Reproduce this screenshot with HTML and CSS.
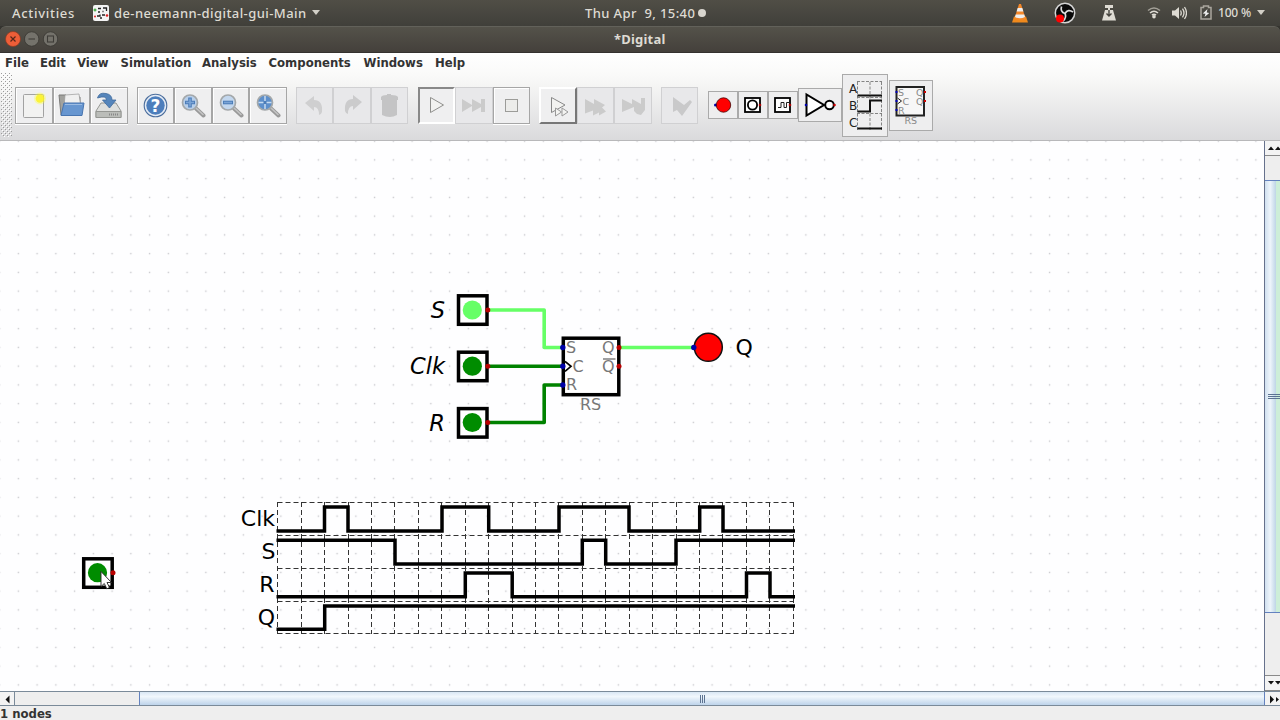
FILE: index.html
```
<!DOCTYPE html>
<html lang="en">
<head>
    <meta charset="UTF-8">
    <meta name="viewport" content="width=device-width, initial-scale=1.0">
    <title>*Digital</title>
    <link rel="stylesheet" href="styles.css">
</head>
<body>
    <!-- desktop bar -->
    <div class="topbar">
        <span class="activities">Activities</span>
        <svg class="app-icon" width="16" height="16" viewBox="0 0 16 16">
            <rect width="16" height="16" rx="2" fill="#f4f4f4"/>
            <path d="M5 3.500h3M10 3h3.500v3M5 7h2M9.500 6.500h1M4 11h3v-1.500M7 13h2M9 10h3" fill="none" stroke="#222" stroke-width="1.300"/>
            <path d="M.5 5h3M2 3.500v3" stroke="#1a9a1a"/>
            <circle cx="2" cy="11.500" r="1" fill="#d22"/><circle cx="14" cy="10.500" r="1.300" fill="#d22"/>
        </svg>
        <span class="app-name">de-neemann-digital-gui-Main</span>
        <i class="caret"></i>
        <span class="clock">Thu Apr&nbsp; 9, 15:40</span>
        <i class="bullet"></i>
        <div class="tray">
            <svg class="vlc" width="18" height="20" viewBox="0 0 18 20">
                <path d="M1 19.500l2-6h12l2 6z" fill="#f08a1d"/>
                <path d="M8 1h2l4.500 14.500q-5.500 3-11 0z" fill="#f5882a"/>
                <path d="M6.700 5h4.600l1.100 3.500H5.600zM4.700 11.500h8.600l.7 2.500q-5 2.500-10 0z" fill="#eee"/>
            </svg>
            <svg class="obs" width="22" height="22" viewBox="0 0 22 22">
                <circle cx="11" cy="11" r="9.700" fill="#090909" stroke="#d4d4d4" stroke-width="1.500"/>
                <path d="M11 11.500Q6 10 7.500 4.500M11 11.500q3-5 8-1.500M11 11.500q2 4-2 7.500" fill="none" stroke="#ddd" stroke-width="1.700"/>
                <circle cx="6" cy="16.500" r="4" fill="#f00"/>
            </svg>
            <svg class="drive" width="14" height="16" viewBox="0 0 14 16">
                <path d="M3 0h8v3H8v2h3l3 10.500H0L3 5h3V3H3z" fill="#dedbd3"/>
                <path d="M7 5v5M4.500 8.500L7 11l2.500-2.500" fill="none" stroke="#45433e" stroke-width="1.400"/>
            </svg>
            <svg class="wifi" width="14" height="13" viewBox="0 0 14 13">
                <path d="M1 4.500q6-5 12 0" fill="none" stroke="#a3a098" stroke-width="1.500"/>
                <path d="M3 7q4-3.500 8 0M5 9.200q2-1.700 4 0" fill="none" stroke="#dedbd3" stroke-width="1.600"/>
                <circle cx="7" cy="10.800" r="1.800" fill="#dedbd3"/>
            </svg>
            <svg class="volume" width="15" height="14" viewBox="0 0 15 14">
                <path d="M0 4.500h3L7 1v12L3 9.500H0z" fill="#dedbd3"/>
                <path d="M8.500 4.500q1.500 2.500 0 5M10.500 2.700q3 4.300 0 8.600M12.500 1q4 6 0 12" fill="none" stroke="#dedbd3" stroke-width="1.300"/>
            </svg>
            <svg class="battery" width="12" height="15" viewBox="0 0 12 15">
                <path d="M1 2.500h2.500V1h5v1.500H11V14H1z" fill="none" stroke="#aaa79e" stroke-width="1.500"/>
                <path d="M7.500 4L2.800 8.500l2.700.3L4.500 12 9.300 8l-2.600-.5z" fill="#eee"/>
            </svg>
            <span class="percent">100 %</span>
            <i class="caret"></i>
        </div>
    </div>

    <div class="titlebar-wrap">
        <div class="titlebar">
            <svg class="win-buttons" width="54" height="18" viewBox="0 0 54 18">
                <circle cx="9" cy="9" r="7.500" fill="#ee5e38" stroke="#8b3b22" stroke-width=".7"/>
                <path d="M6.500 6.500l5 5m0-5l-5 5" stroke="#57271a" stroke-width="1.200"/>
                <circle cx="27.700" cy="9" r="7.200" fill="#74726b" stroke="#33322e" stroke-width=".7"/>
                <path d="M24.500 9h6.500" stroke="#3e3c38" stroke-width="1.100"/>
                <circle cx="46.500" cy="9" r="7.200" fill="#74726b" stroke="#33322e" stroke-width=".7"/>
                <rect x="43.500" y="6" width="6" height="6" fill="none" stroke="#3e3c38" stroke-width="1.100"/>
            </svg>
            <span class="title">*Digital</span>
        </div>
    </div>

    <div class="header">
        <div class="menubar">
            <span class="m-file">File</span>
            <span class="m-edit">Edit</span>
            <span class="m-view">View</span>
            <span class="m-simulation">Simulation</span>
            <span class="m-analysis">Analysis</span>
            <span class="m-components">Components</span>
            <span class="m-windows">Windows</span>
            <span class="m-help">Help</span>
        </div>
        <div class="toolbar">
            <svg class="grip" width="11" height="64">
                <defs>
                    <pattern id="grip" width="4" height="4" patternUnits="userSpaceOnUse">
                        <path d="M0 0h1v1H0zM2 2h1v1H2z" fill="#9b9b9b"/>
                        <path d="M1 1h1v1H1zM3 3h1v1H3z" fill="#fff"/>
                    </pattern>
                </defs>
                <rect width="11" height="64" fill="url(#grip)"/>
            </svg>
            <div class="group">
                <div class="btn">
                    <svg viewBox="0 0 28 28">
                        <rect x="4.500" y="3.500" width="20" height="23" rx="1" fill="#f2f2f1" stroke="#a2a2a2"/>
                        <circle cx="21" cy="7.500" r="6" fill="#ffff35" opacity=".35"/><circle cx="21" cy="7.500" r="4.300" fill="#fcf31c" opacity=".8"/>
                    </svg>
                </div>
                <div class="btn">
                    <svg viewBox="0 0 28 28">
                        <path d="M2 4h7l2 2h12v18H4z" fill="#a2a29e" stroke="#7b7b79"/>
                        <path d="M8 4l14-1 2 14H7z" fill="#f0f0f0" stroke="#999" stroke-width=".7"/>
                        <path d="M7 12h20l-2 12.500H4z" fill="#6796d0" stroke="#4875b0"/>
                        <path d="M8 13.500h17" stroke="#9cbce3"/>
                    </svg>
                </div>
                <div class="btn">
                    <svg viewBox="0 0 28 28">
                        <path d="M7 12h15l5 8v6.500H2V20z" fill="#dedfdd" stroke="#959793"/>
                        <path d="M2 20.500h25v6H2z" fill="#bbbdb9" stroke="#959793"/>
                        <path d="M15 23.500h9" stroke="#888" stroke-width="2" stroke-dasharray="1 1"/>
                        <path d="M3.500 7Q5 1 12 2.500q6 1 6 6.500h4l-6.500 8-7-8h4q0-5-9-2z" fill="#5585bb" stroke="#3f6a9c" stroke-width=".8"/>
                    </svg>
                </div>
            </div>
            <div class="group">
                <div class="btn">
                    <svg viewBox="0 0 28 28">
                        <circle cx="14.500" cy="14.500" r="11.300" fill="#e4ebf5" stroke="#4a6d9c" stroke-width="1.100"/>
                        <circle cx="14.500" cy="14.500" r="9.200" fill="#4d7ebc"/>
                        <text class="help-mark" x="14.500" y="20.500">?</text>
                    </svg>
                </div>
                <div class="btn">
                    <svg viewBox="0 0 28 28">
                        <path d="M18 17.500l7.500 7" stroke="#999" stroke-width="4" stroke-linecap="round"/>
                        <path d="M18 17l7 6.500" stroke="#c4c4c4" stroke-width="1.600" stroke-linecap="round"/>
                        <circle cx="12" cy="11.500" r="7.500" fill="#b8cfea" stroke="#a4a8aa" stroke-width="1.700"/>
                        <path d="M12 6.500v10M7 11.500h10" stroke="#4c7db8" stroke-width="3.600"/><path d="M12 7.500v8M8 11.500h8" stroke="#7ba4d6" stroke-width="1.600"/>
                    </svg>
                </div>
                <div class="btn">
                    <svg viewBox="0 0 28 28">
                        <path d="M18 17.500l7.500 7" stroke="#999" stroke-width="4" stroke-linecap="round"/>
                        <path d="M18 17l7 6.500" stroke="#c4c4c4" stroke-width="1.600" stroke-linecap="round"/>
                        <circle cx="12" cy="11.500" r="7.500" fill="#c3d7ee" stroke="#a4a8aa" stroke-width="1.700"/>
                        <path d="M7 11.500h10" stroke="#4c7db8" stroke-width="3.600"/><path d="M8 11.500h8" stroke="#7ba4d6" stroke-width="1.600"/>
                    </svg>
                </div>
                <div class="btn">
                    <svg viewBox="0 0 28 28">
                        <path d="M18 17.500l7.500 7" stroke="#999" stroke-width="4" stroke-linecap="round"/>
                        <path d="M18 17l7 6.500" stroke="#c4c4c4" stroke-width="1.600" stroke-linecap="round"/>
                        <circle cx="12" cy="11.500" r="7.500" fill="#5d8fcb" stroke="#a4a8aa" stroke-width="1.700"/>
                        <path d="M12 5v13M5.500 11.500h13" stroke="#c6daf0" stroke-width="1.500"/>
                        <rect x="10.500" y="10" width="3" height="3" fill="#4c7db8"/>
                    </svg>
                </div>
            </div>
            <div class="group">
                <div class="btn off">
                    <svg viewBox="0 0 28 28"><path d="M5 12l9-7v4q9 0 8 12-1 3-3 3 0-8-5-8v4z" fill="#cfcfd0"/></svg>
                </div>
                <div class="btn off">
                    <svg viewBox="0 0 28 28"><path d="M24 11l-9-7v4Q6 8 7 20q1 3 3 3 0-8 5-8v4z" fill="#cbcbcc"/></svg>
                </div>
                <div class="btn off">
                    <svg viewBox="0 0 28 28"><path d="M6 6q1-2 6-2V3h4v1q6 0 7 2v3h-1v15q-7 4-15 0V9H6z" fill="#c4c4c5"/></svg>
                </div>
            </div>
            <div class="group">
                <div class="btn pressed">
                    <svg viewBox="0 0 28 28"><path d="M8.500 6.500v15l13-7.500z" fill="#f2f2f0" stroke="#8f8f8c"/></svg>
                </div>
                <div class="btn off">
                    <svg viewBox="0 0 28 28"><path d="M3 8l10 6V8l9 5V8h4v13h-4v-5l-9 5v-6L3 21z" fill="#cbcbcb"/></svg>
                </div>
                <div class="btn">
                    <svg viewBox="0 0 28 28"><rect x="8.500" y="8.500" width="12" height="12" fill="#ececea" stroke="#9c9c99"/></svg>
                </div>
            </div>
            <div class="group">
                <div class="btn raised">
                    <svg viewBox="0 0 28 28">
                        <path d="M7.500 6.500v15l13.500-7.500z" fill="#f2f2f0" stroke="#888"/>
                        <path d="M11.500 17v8l6-4zM18 17v8l6-4z" fill="#f4f4f2" stroke="#999"/>
                    </svg>
                </div>
                <div class="btn off">
                    <svg viewBox="0 0 28 28"><path d="M4 8l9 5V8l11 6-3 2.500 4 4-7 4v-3l-6 3v-5l-8 3z" fill="#cbcbcb"/></svg>
                </div>
                <div class="btn off">
                    <svg viewBox="0 0 28 28"><path d="M3 8l10 5V8l9 5V7h4v12l-4 5-4-1-3-3v-4L3 21z" fill="#cbcbcb"/></svg>
                </div>
            </div>
            <div class="group">
                <div class="btn off">
                    <svg viewBox="0 0 28 28"><path d="M8 6l11 8 6-5 2 2-10 14-5-6-4 2z" fill="#c9c9ca"/></svg>
                </div>
            </div>
            <div class="parts">
                <div class="part small">
                    <svg width="28" height="26"><circle cx="6.500" cy="13" r="1.500" fill="#00a"/><circle cx="14.500" cy="13" r="7.200" fill="#f00" stroke="#400" stroke-width=".8"/></svg>
                </div>
                <div class="part small">
                    <svg width="28" height="26">
                        <rect x="6" y="6" width="15" height="14" fill="#fff" stroke="#000" stroke-width="1.800"/>
                        <circle cx="13.500" cy="13" r="4.600" fill="none" stroke="#000" stroke-width="1.800"/><circle cx="21" cy="13" r="1.300" fill="#a00"/>
                    </svg>
                </div>
                <div class="part small">
                    <svg width="28" height="26">
                        <rect x="6" y="6" width="15" height="14" fill="#fff" stroke="#000" stroke-width="1.800"/>
                        <path d="M9 15.500h3v-5h3v5h2.500v-5H20" fill="none" stroke="#222"/><circle cx="21" cy="13" r="1.300" fill="#a00"/>
                    </svg>
                </div>
                <div class="part not">
                    <svg width="41" height="32">
                        <path d="M7.500 5.500v21L25 16z" fill="#fff" stroke="#000" stroke-width="2"/>
                        <circle cx="30.500" cy="16" r="4.300" fill="#fff" stroke="#000" stroke-width="2"/>
                        <circle cx="7" cy="16" r="1.300" fill="#00a"/><circle cx="35.500" cy="16" r="1.300" fill="#c00"/>
                    </svg>
                </div>
                <div class="part timing">
                    <svg width="44" height="61">
                        <path d="M14.500 7v48M27 7v48M38.500 7v48M14 6.500h25M14 22.500h25M14 38.500h25" fill="none" stroke="#777" stroke-width=".9" stroke-dasharray="3 1.500"/>
                        <path d="M14.500 20.500H39M14.500 36.500H27v-11h12M14.500 53.500H39" fill="none" stroke="#111" stroke-width="2"/>
                        <g class="timing-label"><text x="6" y="18">A</text><text x="6" y="35">B</text><text x="6" y="51.500">C</text></g>
                    </svg>
                </div>
                <div class="part flipflop">
                    <svg width="42" height="49">
                        <rect x="6.500" y="6" width="27.500" height="28.500" fill="#f7f7f7" stroke="#222" stroke-width="2"/>
                        <path d="M7.500 17l4 3-4 3" fill="none" stroke="#222"/>
                        <g class="ff-label"><text x="8" y="14.500">S</text><text x="12.500" y="23.500">C</text><text x="8" y="32.500">R</text><text x="26" y="14.500">Q</text><text x="26" y="23.500">Q</text><text x="14.500" y="43">RS</text></g>
                        <path d="M5.500 11h2M5.500 20h2M5.500 29h2" stroke="#00b" stroke-width="2"/><path d="M34 11h2M34 20h2" stroke="#c00" stroke-width="2"/>
                    </svg>
                </div>
            </div>
        </div>
    </div>

    <div class="workspace">
        <svg class="circuit" width="1264" height="550" viewBox="0 141 1264 550">
            <defs>
                <pattern id="dots" x="-9.800" y="338" width="18.750" height="18.750" patternUnits="userSpaceOnUse">
                    <rect x="8.700" y="8.700" width="1.400" height="1.400" fill="#c6c6ca"/>
                </pattern>
            </defs>
            <rect x="0" y="141" width="1264" height="550" fill="url(#dots)"/>

            <!-- wires -->
            <g fill="none" stroke-width="3.600" stroke-linejoin="round">
                <path class="high" d="M488 310h56.200v37.500H563M619 347.500h75"/>
                <path class="low" d="M488 366.300h75M488 422.500h56.200V385H563"/>
            </g>

            <!-- inputs -->
            <g fill="#fff" stroke="#000" stroke-width="3.500">
                <rect x="458.500" y="295.800" width="28.500" height="28.500"/>
                <rect x="458.500" y="352.200" width="28.500" height="28.500"/>
                <rect x="458.500" y="408.600" width="28.500" height="28.500"/>
                <rect x="83.700" y="558.800" width="28.500" height="28.500"/>
            </g>
            <circle cx="472.300" cy="310" r="9.600" fill="#66ff66"/>
            <g fill="#008c00">
                <circle cx="472.300" cy="366.200" r="9.600"/>
                <circle cx="472.300" cy="422.500" r="9.600"/>
                <circle cx="97.500" cy="572.700" r="9.600"/>
            </g>
            <g class="input-label">
                <text x="445" y="318">S</text>
                <text x="445" y="374.300">Clk</text>
                <text x="445" y="430.600">R</text>
            </g>

            <!-- flip-flop -->
            <rect x="563.300" y="338.200" width="55.500" height="56.500" fill="#fff" stroke="#000" stroke-width="3.500"/>
            <path d="M565 361.300l6 5-6 5" fill="none" stroke="#000" stroke-width="1.700"/>
            <g class="pin-label">
                <text x="566" y="353.300">S</text>
                <text x="572.500" y="372.200">C</text>
                <text x="566" y="390.300">R</text>
                <text x="602" y="353.300">Q</text>
                <text x="602" y="372.200">Q</text>
                <text x="580" y="410">RS</text>
            </g>
            <path d="M603 359h12.500" stroke="#888" stroke-width="1.600"/>

            <!-- output -->
            <circle cx="708.300" cy="347.300" r="14" fill="#f00" stroke="#111" stroke-width="1.500"/>
            <text class="output-label" x="735.500" y="355.400">Q</text>

            <!-- pins -->
            <g fill="#b80000">
                <circle cx="487.800" cy="310" r="2.500"/><circle cx="487.800" cy="366.200" r="2.500"/><circle cx="487.800" cy="422.500" r="2.500"/>
                <circle cx="619" cy="347.500" r="2.500"/><circle cx="619" cy="366.200" r="2.500"/><circle cx="113" cy="572.700" r="2.500"/>
            </g>
            <g fill="#0000a8">
                <circle cx="562.800" cy="347.500" r="2.700"/><circle cx="562.800" cy="366.200" r="2.700"/><circle cx="562.800" cy="385" r="2.700"/><circle cx="693.800" cy="347.500" r="2.700"/>
            </g>

            <!-- timing diagram -->
            <g class="dashes">
                <path d="M277.500 502.500h516M277.500 535.500h516M277.500 568.500h516M277.500 601.500h516M277.500 633.500h516"/>
                <path d="M277.500 502v132M301.500 502v132M324.500 502v132M348.500 502v132M371.500 502v132M394.500 502v132M418.500 502v132M441.500 502v132M465.500 502v132M488.500 502v132M512.500 502v132M535.500 502v132M558.500 502v132M582.500 502v132M605.500 502v132M629.500 502v132M652.500 502v132M676.500 502v132M699.500 502v132M722.500 502v132M746.500 502v132M769.500 502v132M793.500 502v132"/>
            </g>
            <g class="signals">
                <path d="M276.500 531H324.500V507H348V531H442V507H488.700V531H559V507H629V531H699.700V507H723V531H795"/>
                <path d="M276.500 540.200H395V564H582.300V540.200H605.700V564H676V540.200H795"/>
                <path d="M276.500 596.800H465.300V573H512.200V596.800H746.500V573H770V596.800H795"/>
                <path d="M276.500 629.300H324.700V606H795"/>
            </g>
            <g class="signal-label">
                <text x="275" y="526.300">Clk</text>
                <text x="275.500" y="559.200">S</text>
                <text x="274.500" y="592">R</text>
                <text x="275" y="624.700">Q</text>
            </g>

            <!-- mouse pointer -->
            <path d="M101 571.500v15l3.300-3 2.500 5.300 2.700-1.300-2.500-5h4.500z" fill="#fff" stroke="#222" stroke-width=".9"/>
        </svg>
        <div class="vscroll">
            <div class="arrow"><svg width="16" height="14"><path d="M3 9h6L6 5.500zM10 9h6l-3-3.500z" fill="#111"/></svg></div>
            <div class="vthumb"><i></i><i></i><i></i></div>
            <div class="vtrack"></div>
            <div class="arrow"><svg width="16" height="14"><path d="M3 5h6L6 8.500zM10 5h6l-3 3.500z" fill="#111"/></svg></div>
        </div>
    </div>
    <div class="hscroll">
        <div class="harrow"><svg width="14" height="14"><path d="M9.500 3.500v8l-4-4z" fill="#111"/></svg></div>
        <div class="htrack"></div>
        <div class="hthumb"><i></i><i></i><i></i></div>
        <div class="harrow right"><svg width="16" height="14"><path d="M5 3.500v8l4-4zM11 5v5l3-2.500z" fill="#111"/></svg></div>
    </div>
    <div class="status">1 nodes</div>
</body>
</html>
```
FILE: styles.css
```
html, body {
    height: 100%;
    margin: 0;
    overflow: hidden;
}
body {
    display: flex;
    flex-direction: column;
    font-family: "DejaVu Sans", sans-serif;
    background: #eee;
}
svg {
    display: block;
    flex: none;
}

/* desktop bar */
.topbar {
    display: flex;
    align-items: center;
    height: 26px;
    padding-bottom: 1px;
    box-sizing: border-box;
    flex: none;
    background: linear-gradient(#504e46, #403f3a);
    font-family: "Noto Sans", sans-serif;
    font-size: 13px;
    font-weight: 500;
    color: #dedbd3;
    white-space: pre;
}
.activities {
    width: 82px;
    padding-left: 12px;
    box-sizing: border-box;
    letter-spacing: 0.7px;
}
.app-icon {
    margin-left: 11px;
}
.app-name {
    width: 193px;
    margin-left: 5px;
    letter-spacing: 0.42px;
}
.caret {
    border: 4.5px solid transparent;
    border-top: 5px solid #d2cfc7;
    border-bottom: 0;
    margin-left: 5px;
}
.clock {
    margin-left: 265px;
    width: 111px;
    letter-spacing: 0.4px;
}
.bullet {
    width: 8px;
    height: 8px;
    border-radius: 50%;
    background: #d8d5ce;
    margin-left: 2px;
}
.tray {
    display: flex;
    align-items: center;
    margin-left: auto;
    padding-right: 15px;
}
.vlc {
    margin-right: 1px;
}
.obs {
    margin-left: 24px;
}
.drive {
    margin-left: 26px;
}
.wifi {
    margin-left: 31px;
}
.volume {
    margin-left: 11px;
}
.battery {
    margin-left: 13px;
}
.percent {
    width: 32px;
    margin-left: 6px;
    font-size: 12px;
    letter-spacing: -0.2px;
}
.tray .caret {
    margin-left: 7px;
}

/* window frame */
.titlebar-wrap {
    background: #35342f;
    flex: none;
}
.titlebar {
    display: flex;
    align-items: center;
    height: 27px;
    padding-bottom: 1px;
    box-sizing: border-box;
    border-top: 1px solid #62615a;
    border-bottom: 1px solid #35322f;
    border-radius: 6px 6px 0 0;
    background: linear-gradient(#54524a, #44403b);
}
.win-buttons {
    margin-left: 4px;
}
.title {
    margin-left: 556px;
    font: bold 13px "Noto Sans", sans-serif;
    letter-spacing: 0.2px;
    color: #dedbd3;
}
.header {
    height: 88px;
    flex: none;
    box-sizing: border-box;
    border-bottom: 1px solid #b8b8ba;
    background: linear-gradient(#fff, #fafaf9 25%, #dadadc);
}
.menubar {
    display: flex;
    height: 19px;
    line-height: 20px;
    padding-left: 5px;
    font-size: 11.7px;
    font-weight: bold;
    color: #333;
    white-space: nowrap;
}
.m-file { width: 35px; }
.m-edit { width: 37px; }
.m-view { width: 43.5px; }
.m-simulation { width: 81.5px; }
.m-analysis { width: 66.5px; }
.m-components { width: 95px; }
.m-windows { width: 71.5px; }

/* toolbar */
.toolbar {
    display: flex;
    align-items: center;
    height: 66px;
}
.grip {
    margin-left: 1px;
    margin-right: 3px;
}
.group {
    display: flex;
    margin-right: 9.2px;
}
.btn {
    display: flex;
    align-items: center;
    justify-content: center;
    width: 37.5px;
    height: 37px;
    box-sizing: border-box;
    border: 1px solid #a6a6a6;
    box-shadow: inset 1px 1px #fff, 0 1px #fff;
    background: #efeff0;
}
.btn svg {
    width: 28px;
    height: 28px;
    margin-right: 1px;
}
.btn.off {
    border-color: #d0d0d2;
    background: #e8e8ea;
    box-shadow: none;
}
.btn.pressed {
    border: 2px solid #fff;
    border-top-color: #888;
    border-left-color: #888;
    box-shadow: none;
}
.btn.raised {
    border: 2px solid #777;
    border-top-color: #fff;
    border-left-color: #fff;
    box-shadow: none;
}
.help-mark {
    font: bold 17px "DejaVu Sans", sans-serif;
    fill: #fff;
    text-anchor: middle;
}
.parts {
    display: flex;
    align-items: center;
}
.part {
    border: 1px solid #aaa;
    background: #eeeeef;
    box-sizing: border-box;
}
.small {
    width: 30px;
    height: 28px;
}
.not {
    width: 44px;
    height: 34px;
}
.timing {
    width: 46px;
    height: 63px;
}
.flipflop {
    width: 44px;
    height: 51px;
    margin-left: 1px;
}
.timing-label {
    font-size: 12px;
    fill: #222;
}
.ff-label {
    font-size: 9.5px;
    fill: #888;
}

/* circuit */
.workspace {
    display: flex;
    height: 550px;
    flex: none;
}
.circuit {
    background: #fefeff;
}
.high {
    stroke: #66ff66;
}
.low {
    stroke: #008200;
}
.input-label {
    font-size: 22.5px;
    font-style: italic;
    text-anchor: end;
}
.output-label {
    font-size: 22px;
}
.pin-label {
    font-size: 16px;
    fill: #777;
}
.signal-label {
    font-size: 22px;
    text-anchor: end;
}
.dashes {
    stroke: #333;
    stroke-width: 1;
    stroke-dasharray: 5 3;
}
.signals {
    fill: none;
    stroke: #000;
    stroke-width: 3.5;
}

/* scrollbars */
.vscroll {
    display: flex;
    flex-direction: column;
    width: 16px;
    box-sizing: border-box;
    border-left: 1px solid #66718c;
}
.arrow {
    height: 14px;
    background: #f3f3f3;
    border-bottom: 1px solid #8a8a8a;
    overflow: hidden;
}
.vscroll .arrow:first-child {
    margin-bottom: 24px;
}
.vthumb {
    display: flex;
    flex-direction: column;
    align-items: flex-end;
    justify-content: center;
    gap: 1px;
    height: 433px;
    box-sizing: border-box;
    border: 1px solid #6382bf;
    border-width: 1px 0;
    background: linear-gradient(90deg, #d0e0f0, #eef5fb 35%, #c3d8e8 70%, #cdeed8 75%);
}
.vthumb i {
    width: 12px;
    height: 1px;
    background: #5c7391;
}
.vtrack {
    flex: 1;
    border-bottom: 1px solid #8a8a8a;
}
.hscroll {
    display: flex;
    height: 15px;
    flex: none;
    box-sizing: border-box;
    border: 1px solid #7a8a99;
    border-width: 1px 0;
}
.harrow {
    width: 14px;
    background: #f3f3f3;
    border-right: 1px solid #7a8a99;
}
.htrack {
    width: 124px;
}
.hthumb {
    display: flex;
    align-items: center;
    justify-content: center;
    gap: 1px;
    flex: 1;
    border: 1px solid #6382bf;
    border-width: 0 1px;
    background: linear-gradient(#d9e7f4, #f1f7fc 35%, #bdd3ea);
}
.hthumb i {
    width: 1px;
    height: 8px;
    background: #5c7391;
}
.harrow.right {
    width: 15px;
    border: 0;
}
.status {
    height: 14px;
    line-height: 17px;
    font-size: 11.7px;
    font-weight: bold;
    color: #333;
    overflow: hidden;
}
```
